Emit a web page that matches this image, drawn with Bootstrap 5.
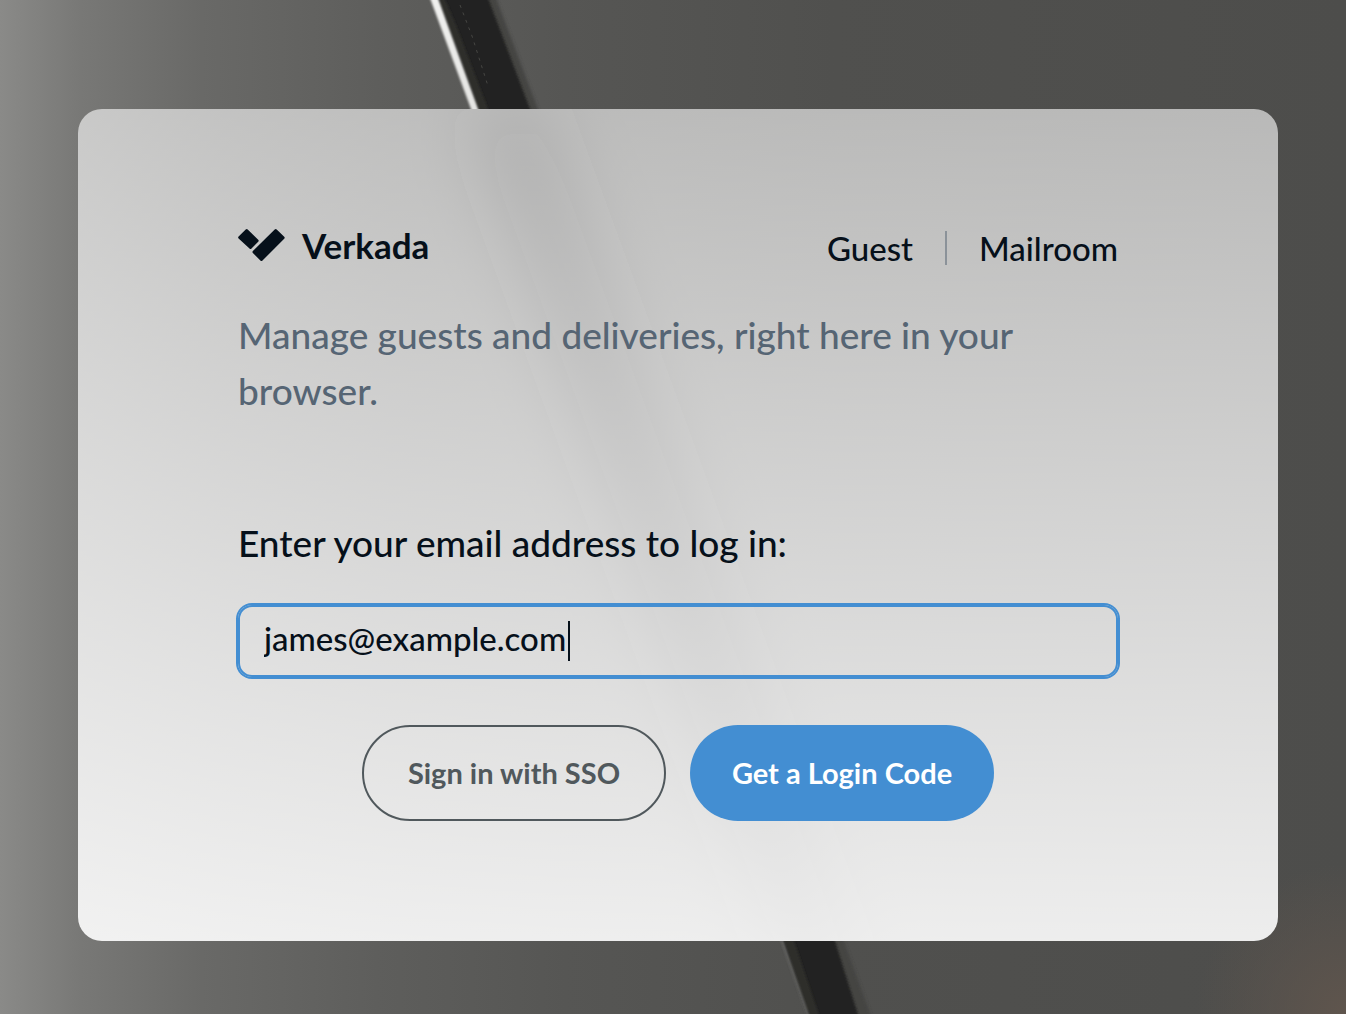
<!DOCTYPE html>
<html lang="en">
<head>
<meta charset="utf-8">
<meta name="viewport" content="width=device-width, initial-scale=1">
<title>Verkada Login</title>
<link href="https://cdn.jsdelivr.net/npm/bootstrap@5.3.0/dist/css/bootstrap.min.css" rel="stylesheet">
<style>
  body {
    font-family: Lato, "Open Sans", sans-serif;
    font-weight: 500;
    color: #06101a;
    background:
      radial-gradient(circle at 100% 100%, #5f554d 0, rgba(84, 80, 75, 0) 150px),
      linear-gradient(90deg, #8a8a88 0, #787876 6%, #696967 15%, #5e5e5c 28%, #565654 42%, #50504e 62%, #4d4d4b 100%);
  }
  .scene { z-index: 0; }
  .login-panel {
    z-index: 1;
    max-width: 1200px;
    margin-left: 10px;
    padding: 120px 160px;
    border-radius: 24px;
    background: linear-gradient(90deg, #787876 0, #696967 12%, #5e5e5c 26%, #585856 40%, #535351 63%, #50504e 100%);
  }
  .frost { z-index: -1; }
  .page { padding: 36px 0 0; }
  .panel-head { margin-bottom: 38px; }
  .brand-name { font-size: 35px; line-height: 32px; font-weight: 700; }
  .top-link { font-size: 33px; line-height: 36px; }
  .top-link, .top-link:hover, .brand, .brand:hover { color: #06101a; text-decoration: none; }
  .product-nav { height: 40px; padding-bottom: 2px; }
  .divider { width: 2px; height: 34px; margin: 0 32px; background: #8b9299; }
  .intro, .prompt { font-size: 37px; line-height: 56px; }
  .intro { color: #566574; margin-bottom: 96px; }
  .prompt { margin-bottom: 34px; }
  .email-box, .email-box:focus {
    height: 72px;
    padding: 0 24px 6px;
    font-size: 33px;
    font-weight: 500;
    color: #06101a;
    caret-color: transparent;
    background: transparent;
    border: 2px solid #438ed2;
    border-radius: 14px;
    box-shadow: 0 0 0 2px #438ed2;
  }
  .text-cursor { left: 330px; top: 16px; width: 2px; height: 40px; background: #06101a; }
  .action { width: 304px; height: 96px; font-size: 29px; font-weight: 700; }
  .action-sso, .action-sso:hover { color: #50585c; border: 2px solid #50585c; }
  .action-code, .action-code:hover { color: #fff; background: #438ed2; border: 0; }
</style>
<script src="https://cdn.jsdelivr.net/npm/bootstrap@5.3.0/dist/js/bootstrap.bundle.min.js"></script>
</head>
<body class="min-vh-100 overflow-hidden">
<svg class="scene position-fixed top-0 start-0 w-100 h-100" viewBox="0 0 1346 1014" preserveAspectRatio="xMidYMid slice" aria-hidden="true">
  <defs>
    <filter id="soft" x="-10%" width="120%"><feGaussianBlur stdDeviation="1.5"/></filter>
    <filter id="crisp" x="-10%" width="120%"><feGaussianBlur stdDeviation=".8"/></filter>
    <linearGradient id="shine" x1="0" y1="0" x2="0" y2="1">
      <stop offset="0" stop-color="#f2f2f0"/><stop offset=".12" stop-color="#e4e4e2"/>
      <stop offset=".3" stop-color="#777775"/><stop offset="1" stop-color="#6c6c6a"/>
    </linearGradient>
  </defs>
  <path d="M440-10L493-10L536 104L842 936L874 1024L848 1024Z" fill="#444442" filter="url(#soft)"/>
  <path d="M434-10L485-10L530 109L835 941L861 1024L811 1024L783 941L478 109Z" fill="#232322" filter="url(#crisp)"/>
  <path d="M441-10L456 25L488 109L794 941L822 1024L811 1024L783 941L478 109L434-10Z" fill="#2e2e2b" filter="url(#crisp)"/>
  <path d="M427-10L435-10L478 109L783 941L812 1024L810 1024L781 941L471 109Z" fill="url(#shine)" filter="url(#crisp)"/>
  <path d="M460 5L472 36L488 86" fill="none" stroke="#464643" stroke-width="1" stroke-dasharray="3 5"/>
</svg>
<main class="page container-fluid min-vh-100 d-flex align-items-center justify-content-center">
  <section class="login-panel position-relative w-100 overflow-hidden">
    <svg class="frost position-absolute top-0 start-0 w-100 h-100" viewBox="0 0 1200 832" preserveAspectRatio="none" aria-hidden="true">
      <defs>
        <filter id="frosted" filterUnits="userSpaceOnUse" x="-200" y="-300" width="1600" height="1432"><feGaussianBlur stdDeviation="38"/></filter>
        <linearGradient id="veil" x1="0" y1="0" x2="0" y2="1">
          <stop offset="0" stop-color="#fff" stop-opacity=".6"/><stop offset="1" stop-color="#fff" stop-opacity=".9"/>
        </linearGradient>
      </defs>
      <path d="M400 0L452 0L780 900L728 900Z" fill="#232322" filter="url(#frosted)"/>
      <rect width="1200" height="832" fill="url(#veil)"/>
    </svg>
    <header class="panel-head d-flex justify-content-between align-items-start">
      <a class="brand d-flex align-items-start gap-3" href="#">
        <svg width="48" height="34" viewBox="0 0 48 34" fill="#06101a" aria-hidden="true">
          <path d="M7.700.600Q8.700-.4 9.700.600L20.200 10.700Q21.200 11.700 20.200 12.700L13.500 19.600Q12.500 20.600 11.500 19.600L.6 9.500Q-.4 8.500.6 7.500Z"/>
          <path d="M36.700.600Q37.700-.4 38.700.600L46.200 7.700Q47.200 8.700 46.200 9.700L24.500 31.400Q23.400 32.400 22.400 31.400L14.900 24Q13.900 23 14.900 22Z"/>
        </svg>
        <span class="brand-name">Verkada</span>
      </a>
      <nav class="product-nav d-flex align-items-center" aria-label="Products">
        <a class="top-link" href="#">Guest</a>
        <span class="divider"></span>
        <a class="top-link" href="#">Mailroom</a>
      </nav>
    </header>
    <p class="intro">Manage guests and deliveries, right here in your browser.</p>
    <form>
      <label class="prompt d-block" for="email">Enter your email address to log in:</label>
      <div class="position-relative mb-5">
        <input class="email-box form-control" id="email" type="email" value="james@example.com">
        <span class="text-cursor position-absolute"></span>
      </div>
      <div class="d-flex flex-wrap justify-content-center gap-4">
        <button class="action action-sso btn rounded-pill" type="button">Sign in with SSO</button>
        <button class="action action-code btn rounded-pill" type="submit">Get a Login Code</button>
      </div>
    </form>
  </section>
</main>
</body>
</html>
